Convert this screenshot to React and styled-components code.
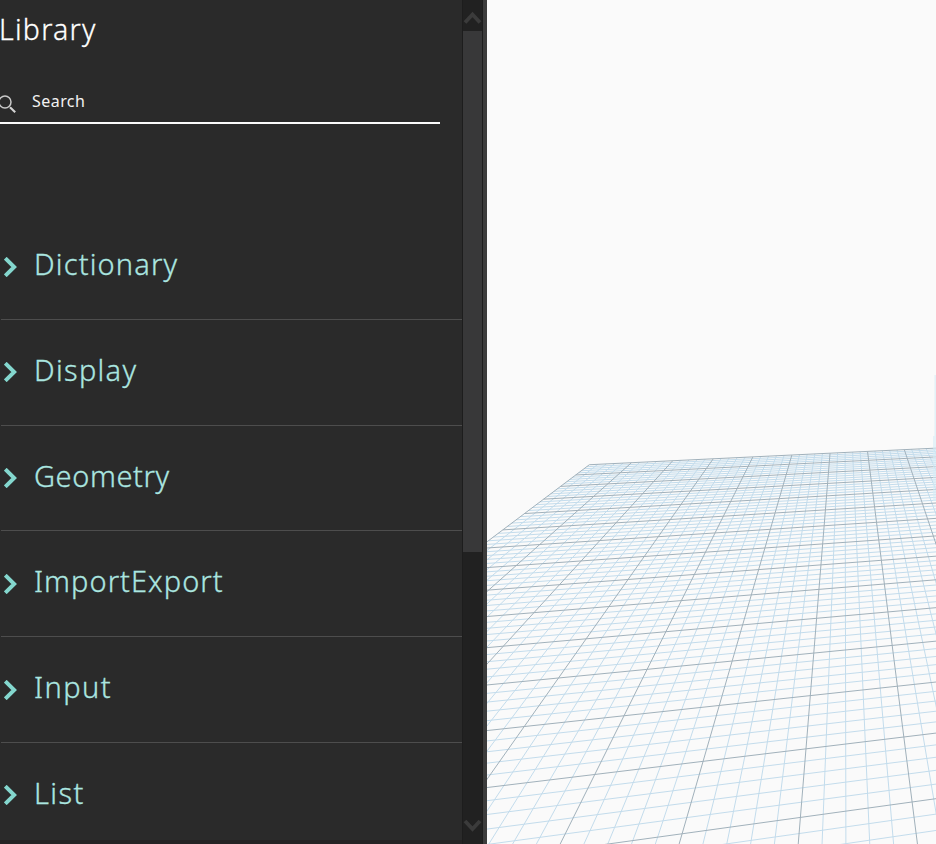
import React from "react";
import styled, { createGlobalStyle } from "styled-components";

const GlobalStyle = createGlobalStyle`
  * { box-sizing: border-box; }
  html, body { margin: 0; padding: 0; overflow: hidden; }
`;

const Workspace = styled.div`
  display: flex;
  width: 936px;
  height: 844px;
  overflow: hidden;
  background: #fafafa;
  font-family: "Noto Sans", "Open Sans", sans-serif;
`;

const Library = styled.aside`
  display: flex;
  flex-direction: column;
  width: 462px;
  height: 844px;
  overflow: hidden;
  background: #2a2a2a;
  border-bottom: 4px solid #252324;
`;

const Title = styled.h1`
  flex: none;
  margin: 0;
  padding-top: 9px;
  height: 84px;
  font-size: 28.5px;
  font-weight: 300;
  line-height: 40px;
  letter-spacing: 1.25px;
  color: #ffffff;
  -webkit-text-stroke: 0.3px currentColor;
  text-indent: -1px;
`;

const SearchBar = styled.label`
  flex: none;
  display: flex;
  align-items: center;
  gap: 15px;
  width: 440px;
  height: 40px;
  border-bottom: 2px solid #fafafa;
`;

const SearchIcon = styled.svg`
  flex: none;
  width: 17px;
  height: 20px;
  margin-top: 2px;
`;

const SearchText = styled.span`
  padding-bottom: 5px;
  font-size: 16px;
  line-height: 22px;
  letter-spacing: 0.45px;
  color: #f2f2f2;
`;

const CategoryList = styled.ul`
  flex: none;
  margin: 90.2px 0 0 1px;
  padding: 0;
  list-style: none;
`;

const Category = styled.li`
  display: flex;
  align-items: center;
  gap: 16px;
  height: 105.75px;
  padding-left: 3px;
  border-bottom: 1px solid #4d4d4d;
`;

const CategoryArrow = styled.svg`
  flex: none;
  width: 14px;
  height: 20px;
`;

const CategoryName = styled.span`
  padding-bottom: 5px;
  font-size: 29px;
  font-weight: 300;
  line-height: 40px;
  letter-spacing: ${({ $tracking }) => $tracking}px;
  color: #abe6e0;
  -webkit-text-stroke: 0.3px currentColor;
`;

const ScrollTrack = styled.div`
  display: flex;
  flex-direction: column;
  width: 21px;
  height: 844px;
  background: #212121;
  border-left: 1px solid #1d1d1d;
  border-right: 1px solid #1d1d1d;
`;

const ScrollButton = styled.svg`
  flex: none;
  width: 19px;
  height: 31px;
`;

const ScrollThumb = styled.div`
  height: 521px;
  margin-bottom: auto;
  background: #383839;
`;

const Splitter = styled.div`
  width: 4px;
  height: 844px;
  background: #3c3c3c;
`;

const Viewport = styled.main`
  width: 449px;
  height: 844px;
  background: #fafafa;
`;

const Scene = styled.svg`
  display: block;
`;

const categories = [
  { name: "Dictionary", tracking: 1.15 },
  { name: "Display", tracking: 1.3 },
  { name: "Geometry", tracking: 0.6 },
  { name: "ImportExport", tracking: 1.05 },
  { name: "Input", tracking: 1.45 },
  { name: "List", tracking: 1.4 },
];

// Perspective projection of ground-plane units to viewport pixels.
const project = (u, v) => {
  const w = 0.01005782 * u - 0.05061743 * v + 1;
  const x = (130.9087 * u - 55.38871 * v + 328.0396) / w;
  const y = (-5.06441 * u + 23.92793 * v + 104.1638) / w;
  return [x / 3 - 7, y / 3 + 430];
};

const segment = (from, to) => {
  const [x1, y1] = project(...from);
  const [x2, y2] = project(...to);
  return `M${x1.toFixed(2)} ${y1.toFixed(2)}L${x2.toFixed(2)} ${y2.toFixed(2)}`;
};

const COLUMNS = 14;
const ROWS = 17;
const minor = [];
const major = [];
for (let i = 0; i <= COLUMNS * 5; i += 1) {
  (i % 5 ? minor : major).push(segment([i / 5, 0], [i / 5, ROWS]));
}
for (let j = 0; j <= ROWS * 5; j += 1) {
  (j % 5 ? minor : major).push(segment([0, j / 5], [COLUMNS, j / 5]));
}

function GroundGrid() {
  return (
    <Scene width="449" height="844" viewBox="0 0 449 844" fill="none">
      <path d={minor.join("")} stroke="#c3dcec" strokeWidth="1" />
      <path d={major.join("")} stroke="#a1b1bb" strokeWidth="1" />
      <path d="M449 375h-1.5v61H446v65h3z" fill="#d5edf7" fillOpacity="0.6" />
    </Scene>
  );
}

export default function App() {
  return (
    <>
      <GlobalStyle />
      <Workspace>
        <Library>
          <Title>Library</Title>
          <SearchBar>
            <SearchIcon viewBox="0 0 17 20" fill="none">
              <circle cx="5" cy="8" r="6" stroke="#c9c9c9" strokeWidth="1.5" />
              <path d="M10 13.2l5.2 5" stroke="#d4d4d4" strokeWidth="2.1" />
            </SearchIcon>
            <SearchText>Search</SearchText>
          </SearchBar>
          <CategoryList>
            {categories.map(({ name, tracking }) => (
              <Category key={name}>
                <CategoryArrow viewBox="0 0 14 20" fill="none">
                  <path d="M1.3 1.2L10.2 10L1.3 18.8" stroke="#84d7ce" strokeWidth="3.9" />
                </CategoryArrow>
                <CategoryName $tracking={tracking}>{name}</CategoryName>
              </Category>
            ))}
          </CategoryList>
        </Library>
        <ScrollTrack>
          <ScrollButton viewBox="0 0 19 31" fill="none">
            <path d="M2 22.5L9.5 14.5L17 22.5" stroke="#3b3b3b" strokeWidth="3.8" />
          </ScrollButton>
          <ScrollThumb />
          <ScrollButton viewBox="0 0 19 31" fill="none">
            <path d="M2 8L9.5 16L17 8" stroke="#3b3b3b" strokeWidth="3.8" />
          </ScrollButton>
        </ScrollTrack>
        <Splitter />
        <Viewport>
          <GroundGrid />
        </Viewport>
      </Workspace>
    </>
  );
}
